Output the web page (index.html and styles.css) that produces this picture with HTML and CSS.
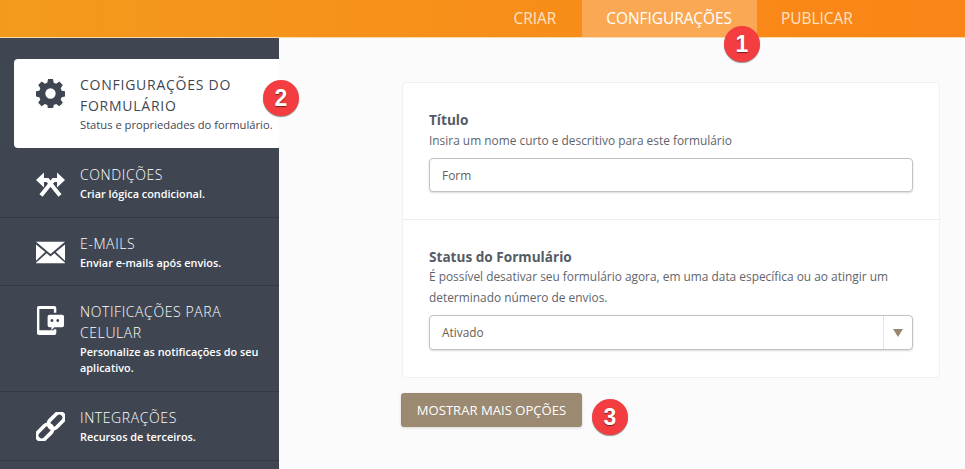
FILE: index.html
```html
<!DOCTYPE html>
<html lang="pt-BR">
<head>
    <meta charset="UTF-8">
    <title>Configurações do Formulário</title>
    <link rel="stylesheet" href="styles.css">
</head>
<body>
    <!-- Barra superior -->
    <header class="topbar">
        <nav class="tabs">
            <a class="tab">CRIAR</a>
            <a class="tab active">CONFIGURAÇÕES</a>
            <a class="tab">PUBLICAR</a>
        </nav>
    </header>

    <div class="layout">
        <!-- Menu lateral -->
        <aside class="sidebar">
            <div class="side-item active">
                <svg class="side-icon" viewBox="0 0 28 28"><path fill="#3f4652" fill-rule="evenodd" d="M11.6 0h4.8l.7 3.6 2.4 1 3-2.100 3.400 3.400-2.100 3 1 2.400 3.600.7v4.800l-3.600.7-1 2.400 2.100 3-3.400 3.400-3-2.100-2.400 1-.7 3.600h-4.800l-.7-3.600-2.400-1-3 2.100-3.400-3.400 2.100-3-1-2.400-3.600-.7v-4.800l3.600-.7 1-2.400-2.100-3 3.400-3.400 3 2.100 2.400-1zM14 9a5 5 0 1 0 0 10 5 5 0 0 0 0-10z"/></svg>
                <div class="side-text">
                    <div class="side-title">CONFIGURAÇÕES DO FORMULÁRIO</div>
                    <div class="side-desc">Status e propriedades do formulário.</div>
                </div>
            </div>
            <div class="side-item first">
                <svg class="side-icon" viewBox="0 0 29 24">
                    <path fill="none" stroke="#fff" stroke-width="4" d="M5 24L17.500 8.500H21M24 24L11.500 8.500H8"/>
                    <path fill="#fff" d="M0 8.500L8 1v15zM29 8.500L21 1v15z"/>
                </svg>
                <div class="side-text">
                    <div class="side-title">CONDIÇÕES</div>
                    <div class="side-desc">Criar lógica condicional.</div>
                </div>
            </div>
            <div class="side-item short">
                <svg class="side-icon" viewBox="0 0 30 22"><path fill="#fff" d="M0 0h30L15 12.500zM0 2.800V19.500l9.500-9zM30 2.800V19.500l-9.500-9zM11 11.800l4 3.400 4-3.400 11 9.700V22H0v-.5z"/></svg>
                <div class="side-text">
                    <div class="side-title">E-MAILS</div>
                    <div class="side-desc">Enviar e-mails após envios.</div>
                </div>
            </div>
            <div class="side-item">
                <svg class="side-icon" viewBox="0 0 28 30"><path fill="#fff" d="M2 0h16a2 2 0 0 1 2 2v5h-2.500V3H2.500v22h15v-1H20v4a2 2 0 0 1-2 2H2a2 2 0 0 1-2-2V2a2 2 0 0 1 2-2z"/><path fill="#fff" fill-rule="evenodd" d="M13 9h13a2 2 0 0 1 2 2v9a2 2 0 0 1-2 2h-8l-3 3v-3h-2a2 2 0 0 1-2-2v-9a2 2 0 0 1 2-2zm4 6a1.500 1.500 0 1 0 0 .01zm6 0a1.500 1.500 0 1 0 0 .01z"/></svg>
                <div class="side-text">
                    <div class="side-title">NOTIFICAÇÕES PARA CELULAR</div>
                    <div class="side-desc">Personalize as notificações do seu aplicativo.</div>
                </div>
            </div>
            <div class="side-item">
                <svg class="side-icon" viewBox="0 0 30 30"><g fill="none" stroke="#fff" stroke-width="3.800" transform="rotate(-45 15 15)"><rect x="-3" y="10" width="19" height="10" rx="5"/><rect x="14" y="10" width="19" height="10" rx="5"/></g></svg>
                <div class="side-text">
                    <div class="side-title">INTEGRAÇÕES</div>
                    <div class="side-desc">Recursos de terceiros.</div>
                </div>
            </div>
        </aside>

        <!-- Conteudo -->
        <main class="content">
            <section class="card">
                <div class="field">
                    <label class="field-label">Título</label>
                    <p class="field-help">Insira um nome curto e descritivo para este formulário</p>
                    <div class="control">Form</div>
                </div>
                <div class="field">
                    <label class="field-label">Status do Formulário</label>
                    <p class="field-help">É possível desativar seu formulário agora, em uma data específica ou ao atingir um determinado número de envios.</p>
                    <div class="control select">
                        <span class="select-value">Ativado</span>
                        <span class="select-arrow"></span>
                    </div>
                </div>
            </section>
            <button class="more-btn">MOSTRAR MAIS OPÇÕES</button>
        </main>
    </div>

    <!-- Marcadores numerados -->
    <span class="badge badge-1">1</span>
    <span class="badge badge-2">2</span>
    <span class="badge badge-3">3</span>
</body>
</html>
```

FILE: styles.css
```css
* { box-sizing: border-box; }

html, body {
    height: 100%;
}

body {
    margin: 0;
    overflow: hidden;
    background-color: #fbfbfb;
    font-family: "Open Sans", "Noto Sans", sans-serif;
    color: #3f4652;
}

/* Barra superior */
.topbar {
    height: 38px;
    padding-left: 490px;
    background: linear-gradient(90deg, #f39a1c 0%, #fb8417 100%);
    border-bottom: 1px solid #fbd9ae;
}
.tabs {
    display: flex;
    height: 37px;
}
.tab {
    padding: 0 24.5px;
    font-size: 15.4px;
    line-height: 37px;
    color: #fde3c4;
}
.tab:first-child {
    padding: 0 25.5px 0 23.5px;
}
.tab.active {
    background-color: #fba854;
    color: #fff;
}

.layout {
    display: flex;
    height: 431px;
}

/* Menu lateral */
.sidebar {
    width: 279px;
    padding-top: 21px;
    background-color: #3f4652;
}
.side-item {
    display: flex;
    gap: 15px;
    padding: 15px 6px 15px 36px;
    border-bottom: 1px solid #343a45;
    color: #fff;
}
.side-item.active {
    height: 89px;
    margin-left: 14px;
    padding: 15px 4px 0 22px;
    background-color: #fff;
    border-bottom: 0;
    border-radius: 4px 0 0 4px;
    color: #3f4652;
}
.side-item.first { padding-top: 16px; }
.side-item.short { padding-bottom: 14px; }
.side-icon {
    flex: none;
    width: 29px;
    height: 29px;
    margin-top: 5px;
}
.side-title {
    font-size: 14px;
    line-height: 21px;
    letter-spacing: 0.6px;
    font-weight: 300;
}
.side-item.active .side-title {
    font-weight: 400;
    letter-spacing: 0.75px;
}
.side-desc {
    margin-top: 1px;
    font-size: 10.9px;
    line-height: 16px;
    font-weight: 600;
}
.side-item.active .side-desc {
    font-size: 11.2px;
    font-weight: 400;
}

/* Conteudo */
.content {
    flex: 1;
    padding: 44px 25px 0 122px;
}
.card {
    margin-left: 1px;
    background-color: #fff;
    border: 1px solid #f1f1f1;
    border-radius: 4px;
}
.field {
    padding: 27px 26px 27px;
}
.field + .field {
    border-top: 1px solid #eeeeee;
}
.field + .field .field-help {
    margin-top: -1px;
}
.field-label {
    display: block;
    font-size: 13.6px;
    line-height: 20px;
    font-weight: 700;
    color: #555b64;
}
.field-help {
    margin: 0 0 7.5px;
    font-size: 11.9px;
    line-height: 20.5px;
    color: #5f656d;
}
.control {
    height: 34px;
    padding-left: 12px;
    border: 1px solid #c4c2bf;
    border-radius: 4px;
    box-shadow: 0 1px 2px rgba(0, 0, 0, 0.15);
    background-color: #fff;
    font-size: 11.9px;
    line-height: 32px;
    color: #6b5f52;
}
.select {
    display: flex;
    justify-content: space-between;
    height: 35px;
    line-height: 33px;
}
.select-arrow {
    position: relative;
    width: 29px;
    border-left: 1px solid #e3e3e3;
}
.select-arrow::after {
    content: "";
    position: absolute;
    left: 9px;
    top: 13px;
    border-left: 5px solid transparent;
    border-right: 5px solid transparent;
    border-top: 8px solid #978772;
}
.more-btn {
    display: block;
    width: 181px;
    height: 34px;
    margin-top: 15px;
    padding: 0;
    border: 0;
    border-radius: 3px;
    background-color: #9b8972;
    box-shadow: 0 1px 3px rgba(0, 0, 0, 0.15);
    font-family: inherit;
    font-size: 13.1px;
    color: #fff;
}

/* Marcadores */
.badge {
    position: absolute;
    width: 36px;
    height: 36px;
    border-radius: 50%;
    background-color: #f43d40;
    box-shadow: 0 1px 1px rgba(0, 0, 0, 0.45);
    font-family: "Liberation Sans", sans-serif;
    font-size: 23px;
    font-weight: 700;
    line-height: 36px;
    text-align: center;
    color: #fff;
    text-shadow: 0 1px 1px rgba(0, 0, 0, 0.5);
}
.badge-1 { left: 724px; top: 26px; }
.badge-2 { left: 263px; top: 80px; }
.badge-3 { left: 592px; top: 399px; }
```
